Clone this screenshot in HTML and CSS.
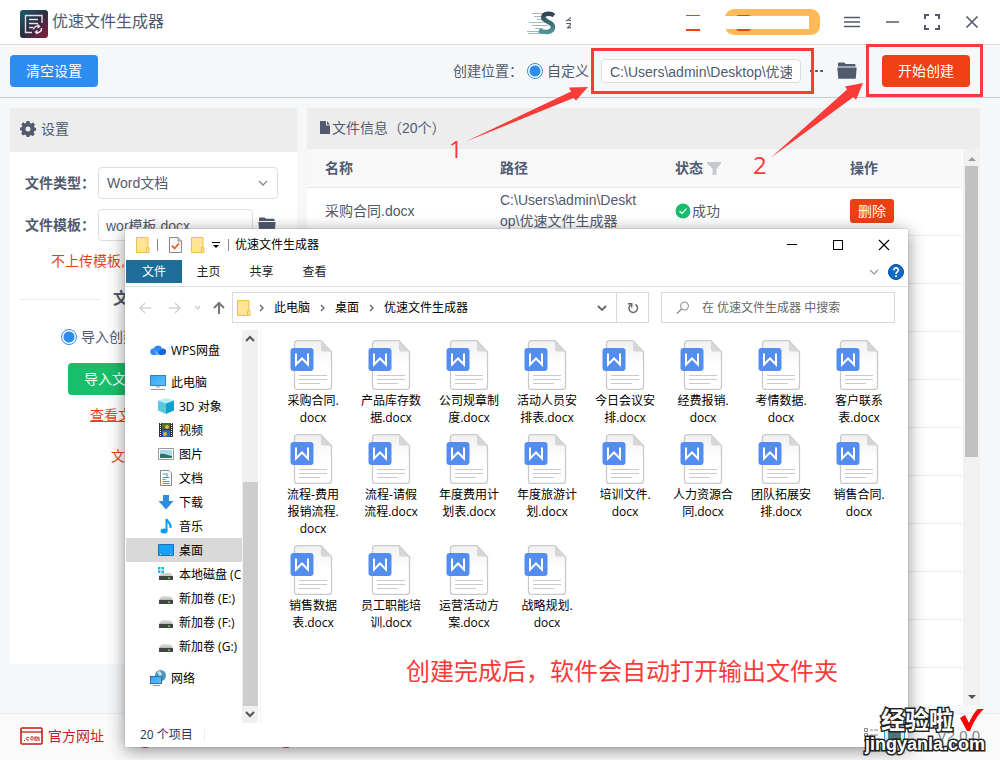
FILE: index.html
```html
<!DOCTYPE html>
<html lang="zh-CN">
<head>
<meta charset="utf-8">
<title>优速文件生成器</title>
<link rel="stylesheet" href="styles.css">
</head>
<body>
<svg class="defs" aria-hidden="true">
  <defs>
    <linearGradient id="gPage" x1="0" y1="0" x2="0" y2="1"><stop offset="0" stop-color="#f0f0f0"/><stop offset=".5" stop-color="#fff"/></linearGradient>
    <linearGradient id="gLogo" x1="0" y1="0" x2="1" y2="1"><stop offset="0" stop-color="#14606f"/><stop offset=".5" stop-color="#2b2c40"/><stop offset="1" stop-color="#8e1f3c"/></linearGradient>
    <linearGradient id="gBlue" x1="0" y1="0" x2="1" y2="1"><stop offset="0" stop-color="#2fa2f5"/><stop offset="1" stop-color="#63c4fb"/></linearGradient>
    <linearGradient id="gS" x1="0" y1="0" x2="0" y2="1"><stop offset="0" stop-color="#2e4450"/><stop offset="1" stop-color="#4d949a"/></linearGradient>
    <linearGradient id="gDrive" x1="0" y1="0" x2="0" y2="1"><stop offset="0" stop-color="#e8e8e8"/><stop offset="1" stop-color="#b5b5b5"/></linearGradient>
  </defs>
  <symbol id="docx" viewBox="0 0 50 50">
    <path d="M9.500 .700H33L43.500 12V46.500a3 3 0 0 1-3 3H9.500a3 3 0 0 1-3-3V3.700a3 3 0 0 1 3-3z" fill="url(#gPage)" stroke="#c9c9c9" stroke-width="1.300"/>
    <path d="M33 1v8.500a2 2 0 0 0 2 2h8z" fill="#d6d6d6"/>
    <rect x="2.500" y="8" width="23" height="23" rx="3" fill="#548df0"/>
    <path d="M8 13.500V24.500L14 18.500L20 24.500V13.500" fill="none" stroke="#fff" stroke-width="2"/>
    <path d="M11 35.500h28M11 39.500h28M11 43.500h21" stroke="#c9c9c9" stroke-width="1"/>
  </symbol>
  <symbol id="folder" viewBox="0 0 20 18">
    <path d="M1 1.500a1 1 0 0 1 1-1h5l2 1.500h8.500a1 1 0 0 1 1 1v1.500H1z" fill="#515a6e"/>
    <path d="M.300 5.500h19.400l-1 11.200H1.300z" fill="#515a6e"/>
  </symbol>
  <symbol id="yfolder" viewBox="0 0 14 16">
    <path d="M.500 .500h11.500v10.500h1v4.500H.500z" fill="#ffe594" stroke="#e8c24c"/>
    <path d="M10.500 15.500V10.500h2" fill="none" stroke="#e8c24c"/>
  </symbol>
  <symbol id="drive" viewBox="0 0 16 16">
    <path d="M3.500 6h9l2.500 4H1z" fill="url(#gDrive)"/><rect x="1" y="10" width="14" height="4" fill="#444"/><rect x="10" y="11.500" width="2" height="1.500" fill="#4de04d"/>
  </symbol>
  <symbol id="chev" viewBox="0 0 6 8"><path d="M1 1l3 3-3 3" fill="none" stroke="#666" stroke-width="1.400"/></symbol>
</svg>

<header class="titlebar">
  <svg class="logo" viewBox="0 0 28 28"><rect width="28" height="28" rx="3" fill="url(#gLogo)"/><path d="M12 22.500H5.500V5.500H22V13M9 9.500h9M9 13.500h9M9 17.500h4" fill="none" stroke="#e8e0e8" stroke-width="1.400"/><path d="M13.500 19.500a4 4 0 0 1 6-3M21.500 18a4 4 0 0 1-6 4M17.500 14.500l2 2-2 1.500M17.500 24l-2-2 2-1.500" fill="none" stroke="#e8e0e8" stroke-width="1.500"/></svg>
  <h1>优速文件生成器</h1>
  <div class="account">
    <svg class="speed" viewBox="0 0 30 24"><path d="M5 2.500h18M7 5.500h11M10 8.500h7M2 11.500h14M5 14.500h16M8 17.500h8M0 20.500h20M1 22.500h22" stroke="#9fb9be" stroke-width="1.200"/><path d="M27 4.500C22 1 15 3 16.500 7.500C18 11 26 11 26 16C26 21 19 22.500 12 19.500" fill="none" stroke="url(#gS)" stroke-width="4.500"/></svg>
    <span class="member">会</span>
    <span class="red-mark"></span>
    <span class="pill"><span class="red-mark"></span><span class="blank"></span></span>
  </div>
  <nav class="controls">
    <button aria-label="菜单"><svg viewBox="0 0 16 16"><path d="M0 3.500h16M0 8h16M0 12.500h16" stroke="#515a6e" stroke-width="1.500"/></svg></button>
    <button aria-label="最小化"><svg viewBox="0 0 16 16"><path d="M2 8h13" stroke="#515a6e" stroke-width="1.500"/></svg></button>
    <button aria-label="全屏"><svg viewBox="0 0 16 16"><path d="M1 5V1h4M11 1h4v4M15 11v4h-4M5 15H1v-4" fill="none" stroke="#515a6e" stroke-width="2"/></svg></button>
    <button aria-label="关闭"><svg viewBox="0 0 16 16"><path d="M2.500 2.500l11 11M13.500 2.500l-11 11" stroke="#515a6e" stroke-width="1.700"/></svg></button>
  </nav>
</header>

<section class="toolbar">
  <button class="btn primary">清空设置</button>
  <div class="target">
    <span>创建位置：</span>
    <label class="radio"><input type="radio" name="place" checked>自定义</label>
    <input class="path" type="text" aria-label="创建位置" value="C:\Users\admin\Desktop\优速">
    <button class="more" aria-label="更多"><svg viewBox="0 0 14 4"><path d="M0 1h3v2H0zM5.500 1h3v2h-3zM11 1h3v2h-3z" fill="#515a6e"/></svg></button>
    <button class="open" aria-label="打开文件夹"><svg><use href="#folder"/></svg></button>
  </div>
  <button class="btn danger">开始创建</button>
</section>

<main>
  <section class="settings">
    <h2><svg viewBox="0 0 16 16"><path d="M6.500 0h3l.4 2 1.500.6L13.200 1.500l1.800 2-1.100 1.800.6 1.200 1.500.4v2.700l-1.700.5-.6 1.400 1 1.700-2 2-1.700-1.100-1.400.6L9.300 16H6.700l-.5-1.800-1.400-.6-1.700 1-2-2 1.100-1.700-.6-1.400L0 9.300V6.700l1.700-.5.6-1.300-1-1.700 2-2L5 2.400l1.100-.5zM8 5.500a2.500 2.500 0 1 0 0 5 2.500 2.500 0 0 0 0-5z" fill="#515a6e" fill-rule="evenodd"/></svg>设置</h2>
    <div class="field"><label for="type">文件类型：</label><span class="select"><select id="type"><option>Word文档</option></select><svg viewBox="0 0 10 6"><path d="M1 1l4 4 4-4" fill="none" stroke="#808695" stroke-width="1.300"/></svg></span></div>
    <div class="field"><label for="tpl">文件模板：</label><input id="tpl" type="text" value="wor模板.docx"><svg class="folder"><use href="#folder"/></svg></div>
    <p class="hint">不上传模板,</p>
    <div class="divider"><b>文件</b></div>
    <label class="radio import"><input type="radio" name="mode" checked>导入创建</label>
    <button class="btn success">导入文件</button>
    <a class="view" href="#">查看文件</a>
    <p class="note">文件</p>
  </section>

  <section class="files">
    <h2><svg viewBox="0 0 10 13"><path d="M0 0h6v4.500h4V13H0zM7 0l3 3.500H7z" fill="#515a6e"/></svg>文件信息（20个）</h2>
    <div class="scroll">
      <div class="tablewrap">
        <table>
          <thead><tr><th>名称</th><th>路径</th><th>状态 <svg viewBox="0 0 14 13"><path d="M0 0h14v1.500L9.500 6.500V13h-4V6.500L0 1.500z" fill="#c5c8ce"/></svg></th><th>操作</th></tr></thead>
          <tbody>
            <tr><td>采购合同.docx</td><td>C:\Users\admin\Desktop\优速文件生成器</td><td><span class="ok"><svg viewBox="0 0 16 16"><circle cx="8" cy="8" r="7.500" fill="#19be6b"/><path d="M4.500 8.200l2.500 2.300 4.500-4.800" fill="none" stroke="#fff" stroke-width="1.200"/></svg>成功</span></td><td><button class="del">删除</button></td></tr>
            <tr><td colspan="4"></td></tr><tr><td colspan="4"></td></tr><tr><td colspan="4"></td></tr><tr><td colspan="4"></td></tr><tr><td colspan="4"></td></tr>
            <tr><td colspan="4"></td></tr><tr><td colspan="4"></td></tr><tr><td colspan="4"></td></tr><tr><td colspan="4"></td></tr><tr><td colspan="4"></td></tr>
          </tbody>
        </table>
      </div>
      <div class="bar"><i class="up"></i><i class="thumb"></i><i class="down"></i></div>
    </div>
  </section>
</main>

<footer>
  <a class="site" href="#"><svg viewBox="0 0 23 18"><rect x="1" y="1" width="21" height="16" rx="1" fill="none" stroke="#d01818" stroke-width="1.600"/><path d="M1 5h21" stroke="#d01818" stroke-width="1.300"/><path d="M4 13.500h1M8.800 10.500a1.500 1.500 0 1 0 0 2.500M12 9.500a1.200 1.800 0 1 0 .01 0M15 14V9.500M15 11c1-2 2-1 2 0v3M17 11c1-2 2-1 2 0v3" fill="none" stroke="#d01818" stroke-width="1"/></svg>官方网址</a>
  <i class="dot"></i><i class="dot"></i>
  <span class="version">V2.0.0</span>
</footer>

<section class="explorer">
  <div class="ex-title">
    <svg class="yf"><use href="#yfolder"/></svg><i class="sep"></i>
    <svg class="prop" viewBox="0 0 13 16"><path d="M.500 .500h8.500l3.500 3.500v11.500H.500z" fill="#f8f8f8" stroke="#888"/><path d="M9 .500V4h3.500" fill="none" stroke="#888"/><path d="M3 8.500l2.500 3 4.500-5" fill="none" stroke="#ee5a20" stroke-width="1.800"/></svg>
    <svg class="yf"><use href="#yfolder"/></svg>
    <svg class="qa" viewBox="0 0 8 8"><path d="M0 1.500h8" stroke="#000"/><path d="M1 4h6L4 7z" fill="#000"/></svg><i class="sep"></i>
    <span>优速文件生成器</span>
    <div class="ex-controls">
      <button aria-label="最小化"><svg viewBox="0 0 12 12"><path d="M1 5.500h10" stroke="#000"/></svg></button>
      <button aria-label="最大化"><svg viewBox="0 0 12 12"><rect x="1.500" y="1.500" width="9" height="9" fill="none" stroke="#000"/></svg></button>
      <button aria-label="关闭"><svg viewBox="0 0 12 12"><path d="M1 1l10 10M11 1L1 11" stroke="#000" stroke-width="1.100"/></svg></button>
    </div>
  </div>
  <div class="tabs">
    <button class="active">文件</button><button>主页</button><button>共享</button><button>查看</button>
    <svg class="fold" viewBox="0 0 10 6"><path d="M1 1l4 4 4-4" fill="none" stroke="#999" stroke-width="1.200"/></svg>
    <svg class="help" viewBox="0 0 16 16"><circle cx="8" cy="8" r="7.500" fill="#0b6cc9" stroke="#084e94"/><path d="M5.700 6.300c0-3.300 4.900-3 4.600 0C10.200 7.800 8 8 8 10M8 11.200v1.800" fill="none" stroke="#fff" stroke-width="1.700"/></svg>
  </div>
  <div class="address">
    <svg class="hist" viewBox="0 0 88 16"><path d="M13 8H2M7 3L2 8l5 5M31 8h11M37 3l5 5-5 5" fill="none" stroke="#d2d2d2" stroke-width="1.500"/><path d="M57 6l2.500 3 2.500-3" fill="none" stroke="#ccc" stroke-width="1.200"/><path d="M81 14V3M76 8l5-5 5 5" fill="none" stroke="#777" stroke-width="2"/></svg>
    <div class="crumbs"><svg class="yf"><use href="#yfolder"/></svg><svg class="ch"><use href="#chev"/></svg><span>此电脑</span><svg class="ch"><use href="#chev"/></svg><span>桌面</span><svg class="ch"><use href="#chev"/></svg><span>优速文件生成器</span>
      <svg class="dd" viewBox="0 0 10 8"><path d="M1 2l4 4 4-4" fill="none" stroke="#666" stroke-width="1.800"/></svg></div>
    <button class="refresh" aria-label="刷新"><svg viewBox="0 0 12 12"><path d="M8.500 2.500A4.300 4.300 0 1 1 3.500 2.800M1 1.700h3.700V5.500" fill="none" stroke="#666" stroke-width="1.500"/></svg></button>
    <label class="search"><svg viewBox="0 0 14 14"><circle cx="8.500" cy="5" r="4" fill="none" stroke="#888"/><path d="M5.500 8L1 12.500" stroke="#888" stroke-width="1.200"/></svg><input type="text" aria-label="搜索" placeholder="在 优速文件生成器 中搜索"></label>
  </div>
  <div class="ex-body">
    <ul class="tree">
      <li class="root"><svg viewBox="0 0 16 16"><path d="M3.500 13a3.200 3.200 0 0 1 0-6.400A5 5 0 0 1 12 5.500L8 13z" fill="#2f86f6"/><path d="M7 13l3.500-5.500a3.300 3.300 0 1 1 2 5.500z" fill="#1466dc"/><path d="M4 7l6 6H6z" fill="#63b3ff"/></svg>WPS网盘</li>
      <li class="root gap"><svg viewBox="0 0 16 16"><rect x=".500" y="1.500" width="15" height="10" fill="url(#gBlue)" stroke="#3c7fae"/><path d="M6 13h4M1 15.500h14" stroke="#8a9aa5"/></svg>此电脑</li>
      <li><svg viewBox="0 0 16 16"><path d="M8 0l8 2.500-8 3-8-3z" fill="#b9edf5"/><path d="M0 2.500l8 3V16l-8-3.500z" fill="#5ac8dc"/><path d="M16 2.500l-8 3V16l8-3.500z" fill="#0ea0d0"/></svg>3D 对象</li>
      <li><svg viewBox="0 0 16 16"><path d="M1 1h14v14H1z" fill="#333"/><path d="M4 1h8v6H4z" fill="#4d6d35"/><path d="M4 8h8v7H4z" fill="#2866c8"/><circle cx="9" cy="5" r="2" fill="#e9b62b"/><circle cx="7" cy="12" r="2" fill="#ddb936"/><path d="M2.500 1v14M13.500 1v14" stroke="#fff" stroke-dasharray="1 1"/></svg>视频</li>
      <li><svg viewBox="0 0 16 16"><path d="M.500 2.500h15v11H.500z" fill="#fff" stroke="#999"/><path d="M2 4h12v8H2z" fill="#a7daf7"/><path d="M2 8c5-1 8 2 12 2v2H2z" fill="#38705f"/></svg>图片</li>
      <li><svg viewBox="0 0 16 16"><path d="M2.500 .500h8.500l2.500 2.500v12.500h-11z" fill="#fff" stroke="#888"/><path d="M4.500 4h4M4.500 7.500h7M4.500 9.500h3M4.500 11.500h7M4.500 13.500h7M9 3v4" stroke="#4a94c6"/></svg>文档</li>
      <li><svg viewBox="0 0 16 16"><path d="M5 1h6v6h4.500L8 15.500.500 7H5z" fill="#2f8be0"/></svg>下载</li>
      <li><svg viewBox="0 0 16 16"><path d="M8.500 13V1c1 3.500 5 4 4 9" fill="none" stroke="#0a9af0" stroke-width="2"/><ellipse cx="6" cy="13" rx="3.500" ry="2.500" fill="#0a9af0"/></svg>音乐</li>
      <li class="sel"><svg viewBox="0 0 16 16"><path d="M.500 2.500h15v11H.500z" fill="#19a1fa" stroke="#1a70b0"/><path d="M2 12.500h12" stroke="#d8f0ff" stroke-dasharray="1 9 1 1"/></svg>桌面</li>
      <li><svg viewBox="0 0 16 16"><path d="M3.500 7h9l2.500 3H1z" fill="#ccc"/><path d="M1 10h14v4H1z" fill="#444"/><path d="M10 11.500h2V13h-2z" fill="#4de04d"/><path d="M0 1h2.500v2.500H0zM3.500 1H6v2.500H3.500zM0 4.500h2.500V7H0zM3.500 4.500H6V7H3.500z" fill="#13b5ea"/></svg>本地磁盘 (C:)</li>
      <li><svg><use href="#drive"/></svg>新加卷 (E:)</li>
      <li><svg><use href="#drive"/></svg>新加卷 (F:)</li>
      <li><svg><use href="#drive"/></svg>新加卷 (G:)</li>
      <li class="root gap"><svg viewBox="0 0 16 16"><circle cx="10.500" cy="5.500" r="5.500" fill="#4a95bb"/><path d="M7 2l3-1 2 3-2 3z" fill="#bfe0e6"/><rect x=".500" y="6.500" width="11" height="7" fill="url(#gBlue)" stroke="#356f9c"/><path d="M3 15.500h7" stroke="#8a9aa5"/></svg>网络</li>
    </ul>
    <div class="ex-bar"><svg viewBox="0 0 10 8"><path d="M1 6l4-4 4 4" fill="none" stroke="#555" stroke-width="2"/></svg><i></i><svg viewBox="0 0 10 8"><path d="M1 2l4 4 4-4" fill="none" stroke="#555" stroke-width="2"/></svg></div>
    <ul class="grid">
      <li><svg><use href="#docx"/></svg>采购合同.<br>docx</li>
      <li><svg><use href="#docx"/></svg>产品库存数<br>据.docx</li>
      <li><svg><use href="#docx"/></svg>公司规章制<br>度.docx</li>
      <li><svg><use href="#docx"/></svg>活动人员安<br>排表.docx</li>
      <li><svg><use href="#docx"/></svg>今日会议安<br>排.docx</li>
      <li><svg><use href="#docx"/></svg>经费报销.<br>docx</li>
      <li><svg><use href="#docx"/></svg>考情数据.<br>docx</li>
      <li><svg><use href="#docx"/></svg>客户联系<br>表.docx</li>
      <li><svg><use href="#docx"/></svg>流程-费用<br>报销流程.<br>docx</li>
      <li><svg><use href="#docx"/></svg>流程-请假<br>流程.docx</li>
      <li><svg><use href="#docx"/></svg>年度费用计<br>划表.docx</li>
      <li><svg><use href="#docx"/></svg>年度旅游计<br>划.docx</li>
      <li><svg><use href="#docx"/></svg>培训文件.<br>docx</li>
      <li><svg><use href="#docx"/></svg>人力资源合<br>同.docx</li>
      <li><svg><use href="#docx"/></svg>团队拓展安<br>排.docx</li>
      <li><svg><use href="#docx"/></svg>销售合同.<br>docx</li>
      <li><svg><use href="#docx"/></svg>销售数据<br>表.docx</li>
      <li><svg><use href="#docx"/></svg>员工职能培<br>训.docx</li>
      <li><svg><use href="#docx"/></svg>运营活动方<br>案.docx</li>
      <li><svg><use href="#docx"/></svg>战略规划.<br>docx</li>
    </ul>
  </div>
  <div class="status"><span>20 个项目</span>
    <svg viewBox="0 0 44 20"><path d="M1.500 3.500h3v3h-3zM1.500 8.500h3v3h-3zM1.500 13.500h3v3h-3zM7 5h3M11 5h4M7 10h3M11 10h4M7 15h3M11 15h4" fill="none" stroke="#888"/><rect x="21.500" y=".500" width="20" height="19" fill="#cde8fb" stroke="#2f9be0"/><rect x="25.500" y="4.500" width="12" height="10" fill="#477a80" stroke="#777"/></svg></div>
</section>

<svg class="marks" viewBox="0 0 1000 760" aria-hidden="true">
  <g fill="none" stroke="#fb3a3a" stroke-width="3"><rect x="592.500" y="49.500" width="220" height="43"/><rect x="867.500" y="45.500" width="114" height="50"/></g>
  <path d="M466 141.500L571 91.500 569 87.500 588 87 576 100.500 573.500 98zM771 157.500L847 89.500 845 86.500 863 83 856 100 853.500 97z" fill="#fb3a3a"/>
</svg>
<span class="mark one">1</span>
<span class="mark two">2</span>
<p class="mark caption">创建完成后，软件会自动打开输出文件夹</p>
<div class="watermark"><div class="wm-top">经验啦<svg viewBox="0 0 24 24"><path d="M0 10l5-3 4 8C12 8 16 2 18 1l6 0C18 6 13 15 10 23H7z" fill="#f00"/></svg></div><div class="wm-url">jingyanla.com</div></div>
</body>
</html>
```
FILE: styles.css
```css
* { box-sizing: border-box; }
body { margin: 0; height: 100vh; display: flex; flex-direction: column; position: relative; overflow: hidden; background: #f5f7f9; color: #515a6e; font: 14px/20px "Liberation Sans", "Noto Sans CJK SC", sans-serif; }
h1, h2, p, ul { margin: 0; padding: 0; }
ul { list-style: none; }
button, input, select { font: inherit; color: inherit; }
button { border: 0; padding: 0; background: none; }
svg { flex: none; display: block; }
.defs { position: absolute; width: 0; height: 0; }

.titlebar { display: flex; align-items: center; height: 45px; flex: none; padding: 0 20px; background: #fff; border-bottom: 1px solid #dcdee2; }
.logo { width: 28px; height: 28px; margin-top: 4px; }
h1 { font-size: 16px; font-weight: 400; margin-left: 4px; }
.account { margin-left: auto; display: flex; align-items: center; }
.speed { width: 30px; height: 24px; margin-top: 2px; }
.member { width: 6px; overflow: hidden; margin-left: 8px; font-size: 14px; }
.red-mark { width: 14px; height: 16px; margin-left: 115px; margin-top: 2px; background: linear-gradient(#ed4014 1px, transparent 1px, transparent 14px, #ed4014 14px); }
.pill { width: 95px; height: 26px; margin-left: 25px; border-radius: 9px; background: #ffb956; display: flex; align-items: center; position: relative; }
.pill .red-mark { margin-left: 11px; width: 15px; border-radius: 3px; background: #ed4014; }
.blank { position: absolute; left: 0; top: 7px; width: 84px; height: 13px; background: #fff; }
.controls { display: flex; gap: 24px; margin-left: 24px; }
.controls svg { width: 16px; height: 16px; }

.toolbar { display: flex; align-items: center; height: 53px; flex: none; padding: 0 30px 0 10px; border-bottom: 1px solid #c5c8ce; }
.btn { height: 32px; padding: 0 16px; border-radius: 4px; color: #fff; }
.primary { background: #2d8cf0; }
.danger { background: #f04015; margin-left: 25px; }
.success { background: #19be6b; }
.target { display: flex; align-items: center; margin-left: auto; }
.radio { display: flex; align-items: center; gap: 4px; }
.radio input { appearance: none; width: 16px; height: 16px; margin: 0; border: 1px solid #2d8cf0; border-radius: 50%; background: radial-gradient(circle, #2d8cf0 5px, #fff 6px); }
.target .radio { margin-left: 4px; }
.path { width: 200px; height: 24px; margin-left: 12px; padding: 0 8px; border: 1px solid #dcdee2; border-radius: 4px; background: #fff; }
.more { margin-left: 9px; }
.more svg { width: 13px; height: 4px; }
.open { margin-left: 14px; }
.open svg { width: 20px; height: 18px; }

main { flex: 1; min-height: 0; display: flex; gap: 10px; padding: 10px 20px 8px 10px; }
h2 { display: flex; align-items: center; font-size: 14px; font-weight: 400; background: #ededed; }
.settings { width: 287px; margin-bottom: 41px; background: #fff; flex: none; }
.settings h2 { height: 44px; padding-left: 10px; padding-bottom: 2px; gap: 5px; margin-bottom: 15px; }
.settings h2 svg { width: 16px; height: 16px; }
.field { display: flex; align-items: center; padding: 0 19px 0 15px; margin-bottom: 10px; height: 32px; }
.field label { width: 73px; font-weight: 700; white-space: nowrap; }
.select { flex: 1; position: relative; }
.select svg { position: absolute; right: 10px; top: 13px; width: 10px; height: 6px; }
.field select, .field input { appearance: none; width: 100%; height: 32px; border: 1px solid #dcdee2; border-radius: 4px; background: #fff; padding: 0 8px; }
.field input { width: 155px; padding: 0 7px; }
.folder { width: 18px; height: 16px; margin-left: 5px; }
.hint { margin: 10px 0 0 41px; color: #ed4014; }
.divider { display: flex; align-items: center; gap: 13px; margin: 18px 10px 0; color: #515a6e; font-size: 16px; }
.divider::before, .divider::after { content: ""; flex: none; width: 80px; height: 1px; background: #e8eaec; }
.divider b { flex: 1; }
.import { margin: 18px 0 0 51px; }
.success { display: block; margin: 16px 0 0 58px; }
.view { display: block; width: 60px; margin: 10px 0 0 80px; color: #ed4014; }
.note { margin: 21px 0 0 101px; color: #ed4014; }

.files { flex: 1; min-width: 0; display: flex; flex-direction: column; }
.files h2 { height: 41px; padding-left: 13px; padding-bottom: 2px; gap: 2px; flex: none; }
.files h2 svg { width: 10px; height: 13px; }
.scroll { flex: 1; min-height: 0; display: flex; }
.tablewrap { flex: 1; overflow: hidden; background: #fff; }
table { width: 100%; border-collapse: collapse; table-layout: fixed; }
th { height: 38px; padding: 0 18px; text-align: left; background: #f8f8f9; border-bottom: 1px solid #e8eaec; }
th:last-child { width: 130px; }
th svg { display: inline-block; width: 14px; height: 13px; vertical-align: -2px; }
td { height: 48px; padding: 0 18px; border-bottom: 1px solid #e8eaec; line-height: 21px; word-break: break-all; }
.ok { display: flex; align-items: center; gap: 1px; }
.ok svg { width: 16px; height: 16px; }
.del { height: 24px; padding: 0 8px; border-radius: 3px; background: #ed4014; color: #fff; }
.bar { width: 18px; padding: 8px 2px 6px; background: #f1f1f1; display: flex; flex-direction: column; align-items: center; border-left: 1px solid #fff; }
.bar i { width: 13px; }
.bar .up, .bar .down { width: 0; border: 4px solid transparent; }
.bar .up { border-top: 0; border-bottom-color: #999; }
.bar .down { border-bottom: 0; border-top-color: #505050; margin-top: auto; }
.bar .thumb { height: 291px; margin-top: 5px; background: #c1c1c1; }

footer { height: 47px; flex: none; display: flex; align-items: center; padding: 0 20px 2px; background: #fafafa; border-top: 1px solid #e8eaec; }
.site { display: flex; align-items: center; gap: 5px; color: #d01818; text-decoration: none; }
.site svg { width: 23px; height: 18px; }
.dot { width: 16px; height: 16px; margin: 8px 0 0 33px; border-radius: 50%; background: #b51a1a; }
.dot + .dot { margin-left: 125px; }
.version { margin-left: auto; font-size: 15px; color: #808695; }

.explorer { position: absolute; left: 125px; top: 229px; width: 783px; height: 518px; display: flex; flex-direction: column; padding: 0 1px; background: #fff; color: #000; box-shadow: 0 0 1px #888, 0 3px 16px rgba(0, 0, 0, .45); font: 12px/17px "Open Sans", "Noto Sans CJK SC", sans-serif; }
.yf { width: 14px; height: 16px; }
.ex-title { display: flex; align-items: center; height: 31px; padding-left: 10px; }
.sep { width: 1px; height: 12px; background: #888; margin: 0 11px 0 7px; }
.prop { width: 13px; height: 16px; margin-right: 9px; }
.qa { width: 8px; height: 8px; margin-left: 7px; }
.ex-title .qa + .sep { margin: 0 6px 0 8px; }
.ex-controls { display: flex; gap: 34px; margin-left: auto; padding-right: 17px; }
.ex-controls svg { width: 12px; height: 12px; }
.tabs { display: flex; align-items: center; height: 27px; padding: 0 3px 3px 0; border-bottom: 1px solid #dadbdc; }
.tabs button { width: 53px; height: 23px; color: #222; }
.tabs .active { width: 56px; background: #1f6e99; color: #fff; }
.fold { width: 10px; height: 6px; margin-left: auto; }
.help { width: 16px; height: 16px; margin-left: 9px; }
.address { display: flex; align-items: center; height: 31px; margin: 5px 12px 7px; }
.hist { width: 88px; height: 16px; margin-right: 6px; }
.crumbs { flex: 1; height: 31px; display: flex; align-items: center; padding: 0 9px 0 4px; border: 1px solid #d9d9d9; }
.ch { width: 6px; height: 8px; margin: 0 9px 0 8px; }
.crumbs span + .ch { margin: 0 9px 0 10px; }
.dd { width: 10px; height: 8px; margin-left: auto; }
.refresh { width: 32px; height: 31px; border: 1px solid #d9d9d9; border-left: 0; display: grid; place-items: center; margin-right: 12px; }
.refresh svg { width: 12px; height: 12px; }
.search { width: 234px; height: 31px; border: 1px solid #d9d9d9; display: flex; align-items: center; padding-left: 14px; gap: 12px; }
.search svg { width: 14px; height: 14px; }
.search input { border: 0; outline: 0; padding: 0; width: 180px; background: none; }
.search input::placeholder { color: #666; opacity: 1; }
.ex-body { flex: 1; min-height: 0; display: flex; }
.tree { width: 116px; padding-top: 8px; overflow: hidden; white-space: nowrap; flex: none; }
.tree li { display: flex; align-items: center; height: 24px; padding-left: 32px; gap: 5px; overflow: hidden; }
.tree .root { padding-left: 24px; }
.tree .gap { margin-top: 8px; }
.tree .sel { background: #d9d9d9; }
.tree svg { width: 16px; height: 16px; }
.ex-bar { width: 16px; flex: none; display: flex; flex-direction: column; align-items: center; justify-content: space-between; padding: 5px 0; background: #f0f0f0; }
.ex-bar svg { width: 10px; height: 8px; }
.ex-bar i { width: 15px; height: 224px; margin: auto 0 4px; background: #cdcdcd; }
.grid { flex: 1; margin-left: 2px; padding: 10px 0 0 13px; border-left: 1px solid #f2f2f2; display: grid; grid-template-columns: repeat(8, 78px); grid-auto-rows: max-content; align-content: start; row-gap: 8px; text-align: center; }
.grid svg { width: 50px; height: 50px; margin: 0 auto 2px; }
.status { height: 24px; display: flex; align-items: center; justify-content: space-between; padding-left: 14px; color: #1e395b; }
.status span { padding-right: 11px; border-right: 1px solid #eee; line-height: 12px; }
.status svg { width: 44px; height: 20px; }

.marks { position: absolute; left: 0; top: 0; width: 1000px; height: 760px; pointer-events: none; }
.mark { position: absolute; color: #fb3a3a; font: 24px/32px "Noto Sans CJK SC", sans-serif; }
.one, .two { font-family: "Open Sans", sans-serif; }
.one { left: 449px; top: 133px; }
.two { left: 753px; top: 149px; }
.caption { left: 406px; top: 654px; }
.watermark { position: absolute; right: 15px; bottom: 6px; color: #fff; font-weight: 700; -webkit-text-stroke: 3px #222; paint-order: stroke fill; }
.wm-top { display: flex; font-size: 24px; line-height: 26px; margin-left: 16px; }
.wm-top svg { width: 24px; height: 24px; margin-left: 7px; }
.wm-top path { stroke: none; }
.wm-url { font-size: 18px; line-height: 20px; }
```
